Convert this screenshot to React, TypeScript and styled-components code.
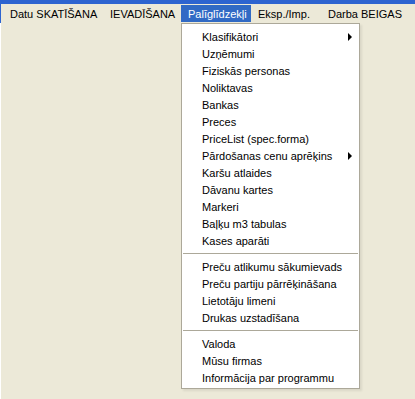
import { createGlobalStyle } from "styled-components";
import styled from "styled-components";

const GlobalStyle = createGlobalStyle`
  html, body {
    margin: 0;
    padding: 0;
    background: #ece9d8;
  }
  body {
    font-family: "Liberation Sans", Arial, sans-serif;
    font-size: 11px;
    color: #000;
  }
`;

type Entry = { label: string; sub?: boolean } | "sep";

const menuBar = [
  { label: "Datu SKATĪŠANA", w: 100 },
  { label: "IEVADĪŠANA", w: 78 },
  { label: "Palīglīdzekļi", w: 70 },
  { label: "Eksp./Imp.", w: 70 },
  { label: "Darba BEIGAS", w: 84 },
];

const entries: Entry[] = [
  { label: "Klasifikātori", sub: true },
  { label: "Uzņēmumi" },
  { label: "Fiziskās personas" },
  { label: "Noliktavas" },
  { label: "Bankas" },
  { label: "Preces" },
  { label: "PriceList (spec.forma)" },
  { label: "Pārdošanas cenu aprēķins", sub: true },
  { label: "Karšu atlaides" },
  { label: "Dāvanu kartes" },
  { label: "Markeri" },
  { label: "Baļķu m3 tabulas" },
  { label: "Kases aparāti" },
  "sep",
  { label: "Preču atlikumu sākumievads" },
  { label: "Preču partiju pārrēķināšana" },
  { label: "Lietotāju limeni" },
  { label: "Drukas uzstadīšana" },
  "sep",
  { label: "Valoda" },
  { label: "Mūsu firmas" },
  { label: "Informācija par programmu" },
];

const App = () => {
  return (
    <Window>
      <GlobalStyle />
      <TitleEdge />
      <Bar>
        {menuBar.map((m, i) => (
          <BarItem key={m.label} $w={m.w} $active={i === 2}>
            <BarLabel $active={i === 2}>{m.label}</BarLabel>
            {i === 2 && (
              <Dropdown>
                {entries.map((e, j) =>
                  e === "sep" ? (
                    <Separator key={"s" + j} />
                  ) : (
                    <Item key={e.label}>
                      <span>{e.label}</span>
                      {e.sub && <Arrow />}
                    </Item>
                  )
                )}
              </Dropdown>
            )}
          </BarItem>
        ))}
      </Bar>
      <Body />
    </Window>
  );
};

export default App;

const Window = styled.div`
  width: 415px;
  height: 399px;
  display: flex;
  flex-direction: column;
  background: #ece9d8;
  overflow: hidden;
`;

const TitleEdge = styled.div`
  height: 4px;
  background: #2d64d0;
`;

const Bar = styled.div`
  height: 19px;
  display: flex;
  align-items: stretch;
  padding-left: 2px;
  border-left: 1px solid #2d64d0;
`;

const BarItem = styled.div<{ $w: number; $active?: boolean }>`
  position: relative;
  width: ${(p) => p.$w}px;
  display: flex;
  align-items: stretch;
  padding: 1px 0 1px;
  white-space: nowrap;
`;

const BarLabel = styled.div<{ $active?: boolean }>`
  flex: 1;
  display: flex;
  align-items: center;
  padding-left: 7px;
  background: ${(p) => (p.$active ? "#316ac5" : "transparent")};
  color: ${(p) => (p.$active ? "#fff" : "#000")};
`;

const Body = styled.div`
  flex: 1;
  border-left: 1px solid #fff;
`;

const Dropdown = styled.div`
  position: absolute;
  top: 19px;
  left: 0;
  width: 177px;
  padding: 4px 0 2px;
  background: #fff;
  border: 1px solid #aca899;
  box-shadow: 2px 2px 2px rgba(0, 0, 0, 0.08);
  color: #000;
  display: flex;
  flex-direction: column;
`;

const Item = styled.div`
  height: 17px;
  display: flex;
  align-items: center;
  justify-content: space-between;
  padding: 0 7px 0 20px;
`;

const Arrow = styled.i`
  width: 0;
  height: 0;
  border-top: 4px solid transparent;
  border-bottom: 4px solid transparent;
  border-left: 4px solid #000;
`;

const Separator = styled.div`
  height: 1px;
  margin: 4px 1px;
  background: #aca899;
`;
